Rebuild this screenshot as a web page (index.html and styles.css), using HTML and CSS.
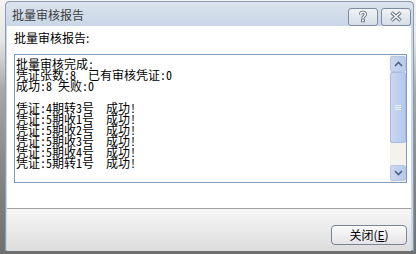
FILE: index.html
```html
<!DOCTYPE html>
<html>
<head>
<meta charset="utf-8">
<link rel="stylesheet" href="styles.css">
</head>
<body>
<div class="window">
  <div class="titlebar">
    <span class="title">批量审核报告</span>
    <div class="tbtns">
      <div class="tbtn help">
        <svg width="12" height="13" viewBox="0 0 12 13">
          <g fill="none" stroke-linecap="butt" stroke-linejoin="round">
            <path d="M3.6 4.4 C3.6 1.6 8.4 1.6 8.4 4.2 C8.4 6 6 6 6 8" stroke="#5d6b7c" stroke-width="3.2"/>
            <path d="M3.6 4.4 C3.6 1.6 8.4 1.6 8.4 4.2 C8.4 6 6 6 6 8" stroke="#fff" stroke-width="1.4"/>
          </g>
          <rect x="4.6" y="9" width="2.8" height="2.8" fill="#fff" stroke="#5d6b7c" stroke-width="0.9"/>
        </svg>
      </div>
      <div class="tbtn close">
        <svg width="14" height="11" viewBox="0 0 14 11">
          <path d="M2.5 1.5 L11.5 9.5 M11.5 1.5 L2.5 9.5" stroke="#5d6b7c" stroke-width="3.4" fill="none"/>
          <path d="M2.8 1.8 L11.2 9.2 M11.2 1.8 L2.8 9.2" stroke="#fff" stroke-width="1.5" fill="none"/>
        </svg>
      </div>
    </div>
  </div>
  <div class="client">
    <div class="label">批量审核报告:</div>
    <div class="textbox">
      <div class="content">批量审核完成:
凭证张数:8  已有审核凭证:0
成功:8 失败:0

凭证:4期转3号  成功!
凭证:5期收1号  成功!
凭证:5期收2号  成功!
凭证:5期收3号  成功!
凭证:5期收4号  成功!
凭证:5期转1号  成功!</div>
      <div class="scrollbar">
        <div class="sbtn">
          <svg width="9" height="6" viewBox="0 0 9 6"><path d="M1 5 L4.5 1.5 L8 5" fill="none" stroke="#4d6185" stroke-width="1.6"/></svg>
        </div>
        <div class="thumb">
          <div class="grip"></div>
        </div>
        <div class="track"></div>
        <div class="sbtn">
          <svg width="9" height="6" viewBox="0 0 9 6"><path d="M1 1 L4.5 4.5 L8 1" fill="none" stroke="#4d6185" stroke-width="1.6"/></svg>
        </div>
      </div>
    </div>
  </div>
  <div class="footer">
    <div class="button">关闭(<u>E</u>)</div>
  </div>
</div>
</body>
</html>
```
FILE: styles.css
```css
html, body {
  margin: 0;
  padding: 0;
}
body {
  width: 416px;
  height: 254px;
  overflow: hidden;
  background: linear-gradient(to bottom, #f4f4f4 0px, #e6e6e6 40px, #a8a8a8 90px, #8a8a8a 160px, #6f6f6f 254px);
  font-family: "Noto Sans CJK SC", "Noto Sans", sans-serif;
  font-size: 12px;
  color: #000;
}
.window {
  margin: 1px 0 0 5px;
  width: 409px;
  height: 250px;
  display: flex;
  flex-direction: column;
  background: #c9d6e6;
  border-radius: 5px 5px 0 0;
  box-shadow: inset 0 0 0 1px #8c9cb2;
  box-sizing: border-box;
}
.titlebar {
  height: 25px;
  display: flex;
  align-items: center;
  justify-content: space-between;
  padding: 0 2px 0 6px;
  background: linear-gradient(to bottom, #dbe4ee, #c9d6e6);
  border-radius: 5px 5px 0 0;
  border: 1px solid #8c9cb2;
  border-bottom: none;
  box-sizing: border-box;
}
.title {
  color: #3c3c3c;
  font-size: 12px;
  line-height: 12px;
  margin-top: 1px;
}
.tbtns {
  display: flex;
  gap: 3px;
  margin-top: 5px;
}
.tbtn {
  width: 30px;
  height: 18px;
  box-sizing: border-box;
  border: 1px solid #7c8ba0;
  border-radius: 3px;
  background: linear-gradient(to bottom, #f0f3f7, #d6dee8);
  display: flex;
  align-items: center;
  justify-content: center;
}
.client {
  height: 182px;
  background: #fff;
  margin: 0 3px 0 2px;
  padding: 5px 0 0 7px;
  box-sizing: border-box;
  display: flex;
  flex-direction: column;
}
.label {
  line-height: 14px;
  height: 14px;
  font-size: 12px;
}
.textbox {
  margin-top: 9px;
  width: 393px;
  height: 129px;
  box-sizing: border-box;
  border: 1px solid #7f9db9;
  display: flex;
}
.content {
  flex: 1;
  white-space: pre;
  font-size: 12px;
  line-height: 11px;
  padding: 3px 0 0 1px;
  font-feature-settings: "hwid" 1;
  overflow: hidden;
}
.scrollbar {
  width: 16px;
  display: flex;
  flex-direction: column;
  padding: 1px 0;
  box-sizing: border-box;
  background: #f4f2ec;
}
.sbtn {
  height: 16px;
  box-sizing: border-box;
  border: 1px solid #b5c7e3;
  border-radius: 2px;
  background: linear-gradient(to right, #c9d8f1, #b8cbea);
  display: flex;
  align-items: center;
  justify-content: center;
}
.thumb {
  height: 71px;
  box-sizing: border-box;
  border: 1px solid #a8bde0;
  border-radius: 2px;
  background: linear-gradient(to right, #c8d7f2, #b5c8ea);
  display: flex;
  align-items: center;
  justify-content: center;
}
.grip {
  width: 6px;
  height: 5px;
  background: repeating-linear-gradient(to bottom, #eef3fc 0 1px, transparent 1px 2px);
}
.track {
  flex: 1;
}
.footer {
  flex: 1;
  margin: 0 3px 0 2px;
  border-top: 1px solid #a0a0a0;
  background: linear-gradient(to bottom, #f7f7f7, #dcdcdc);
  display: flex;
  justify-content: flex-end;
  align-items: flex-start;
  padding: 16px 4px 0 0;
}
.button {
  width: 76px;
  height: 20px;
  box-sizing: border-box;
  border: 1px solid #7a8497;
  border-radius: 4px;
  background: linear-gradient(to bottom, #fbfbfb, #e4e4e8);
  display: flex;
  align-items: center;
  justify-content: center;
  font-size: 12px;
  line-height: 12px;
}
.button u {
  text-decoration: underline;
}
```
